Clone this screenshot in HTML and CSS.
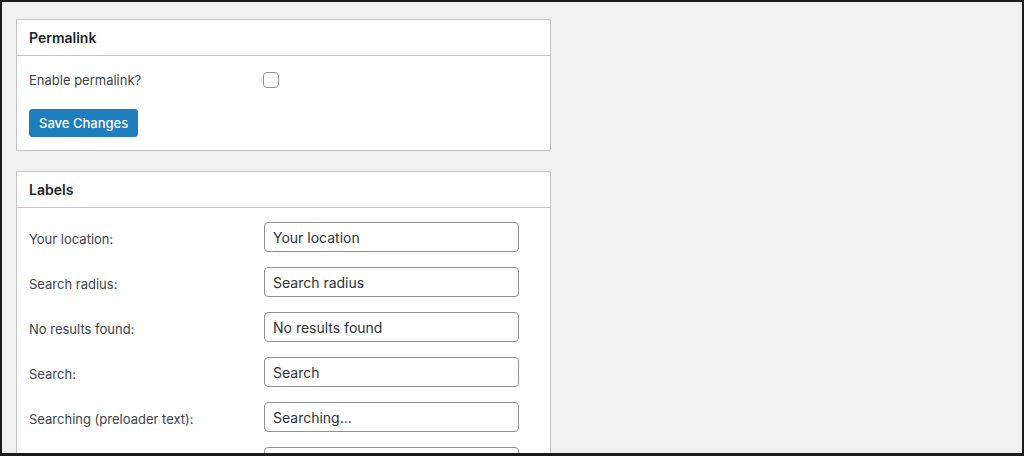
FILE: index.html
```html
<!DOCTYPE html>
<html lang="en">
<head>
  <meta charset="UTF-8">
  <meta name="viewport" content="width=device-width, initial-scale=1.0">
  <title>Settings</title>
  <link rel="stylesheet" href="styles.css">
</head>
<body>
  <div class="frame">
    <div class="postbox">
      <h2 class="postbox-title">Permalink</h2>
      <div class="postbox-body">
        <div class="field-row check-row">
          <label class="field-label">Enable permalink?</label>
          <span class="checkbox"></span>
        </div>
        <button class="button-primary">Save Changes</button>
      </div>
    </div>

    <div class="postbox">
      <h2 class="postbox-title">Labels</h2>
      <div class="postbox-body labels">
        <div class="field-row">
          <label class="field-label">Your location:</label>
          <input class="text-input" type="text" value="Your location">
        </div>
        <div class="field-row">
          <label class="field-label">Search radius:</label>
          <input class="text-input" type="text" value="Search radius">
        </div>
        <div class="field-row">
          <label class="field-label">No results found:</label>
          <input class="text-input" type="text" value="No results found">
        </div>
        <div class="field-row">
          <label class="field-label">Search:</label>
          <input class="text-input" type="text" value="Search">
        </div>
        <div class="field-row">
          <label class="field-label">Searching (preloader text):</label>
          <input class="text-input" type="text" value="Searching...">
        </div>
        <div class="field-row">
          <label class="field-label"></label>
          <input class="text-input" type="text">
        </div>
      </div>
    </div>
  </div>
</body>
</html>
```

FILE: styles.css
```css
* {
  box-sizing: border-box;
}
html, body {
  margin: 0;
  padding: 0;
}
body {
  font-family: Inter, "Noto Sans", sans-serif;
  color: #3c434a;
}
.frame {
  height: 456px;
  overflow: hidden;
  background: #f1f1f1;
  border: 2px solid #1b1b1b;
  border-bottom-width: 3px;
  padding: 17px 0 0 14px;
}
.postbox {
  width: 535px;
  background: #fff;
  border: 1px solid #c3c4c7;
  margin-bottom: 20px;
}
.postbox-title {
  margin: 0;
  padding: 8px 12px;
  font-size: 14px;
  line-height: 19px;
  font-weight: 600;
  color: #1d2327;
  border-bottom: 1px solid #c3c4c7;
}
.postbox-body {
  padding: 12px 12px 13px;
}
.postbox-body.labels {
  padding-top: 14px;
  display: flex;
  flex-direction: column;
  gap: 15px;
}
.field-row {
  display: flex;
  align-items: center;
}
.check-row {
  height: 24px;
  margin-bottom: 17px;
}
.field-label {
  width: 235px;
  flex: none;
  font-size: 13px;
  padding-top: 3px;
}
.check-row .field-label {
  width: 234px;
  padding-top: 0;
}
.checkbox {
  width: 16px;
  height: 16px;
  border: 1px solid #8c8f94;
  border-radius: 4px;
  background: #fff;
}
.button-primary {
  display: block;
  height: 28px;
  padding: 0 9px;
  font-family: inherit;
  font-size: 13px;
  font-weight: 500;
  color: #fff;
  background: #1f7ebd;
  border: 1px solid #1f7ebd;
  border-radius: 3px;
}
.text-input {
  width: 255px;
  height: 30px;
  padding: 0 8px;
  font-family: inherit;
  font-size: 14px;
  color: #2c3338;
  background: #fff;
  border: 1px solid #8c8f94;
  border-radius: 4px;
}
```
